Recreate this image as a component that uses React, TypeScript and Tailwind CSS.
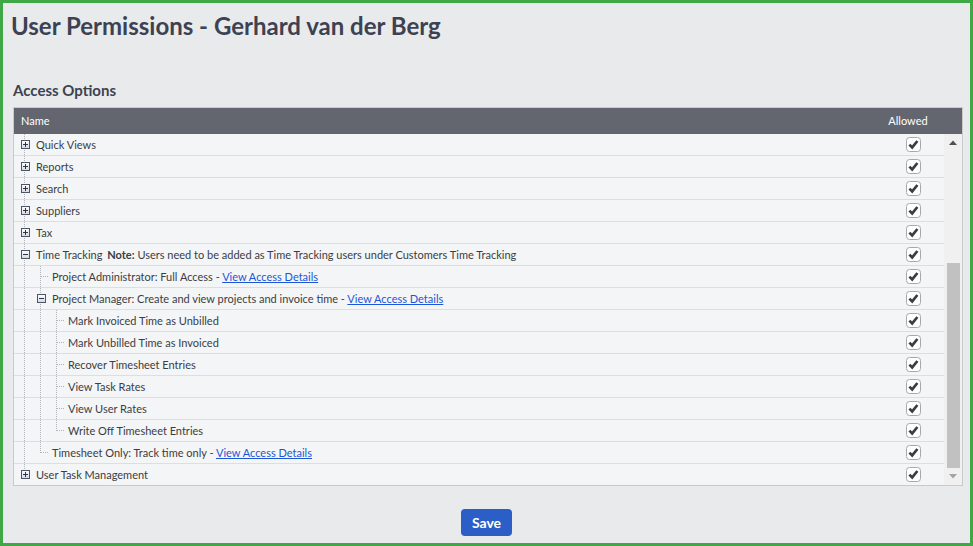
import React from "react";

type Kind = "line" | "tee" | "end" | "plus" | "minus" | "plusEnd";

const DOT = "border-[#b2b4b8]";

function Expander({ open }: { open: boolean }) {
  return (
    <svg width="9" height="9" viewBox="0 0 9 9" className="absolute left-[5px] top-[6px]">
      <defs>
        <linearGradient id="eg" x1="0" y1="0" x2="0" y2="1">
          <stop offset="0" stopColor="#ffffff" />
          <stop offset="1" stopColor="#d3d7de" />
        </linearGradient>
      </defs>
      <rect x="0.5" y="0.5" width="8" height="8" fill="url(#eg)" stroke="#4d5669" />
      <line x1="2" y1="4.5" x2="7" y2="4.5" stroke="#2f3647" strokeWidth="1" />
      {!open && <line x1="4.5" y1="2" x2="4.5" y2="7" stroke="#2f3647" strokeWidth="1" />}
    </svg>
  );
}

function TreeCell({ kind }: { kind: Kind }) {
  const full = kind === "line" || kind === "tee" || kind === "plus" || kind === "minus";
  const half = kind === "end" || kind === "plusEnd";
  const elbow = kind === "tee" || kind === "end";
  const exp = kind === "plus" || kind === "minus" || kind === "plusEnd";
  return (
    <div className="relative w-[16px] h-[21px] shrink-0">
      {full && <div className={`absolute left-[8px] top-0 bottom-0 border-l border-dotted ${DOT}`} />}
      {half && <div className={`absolute left-[8px] top-0 h-[11px] border-l border-dotted ${DOT}`} />}
      {elbow && <div className={`absolute left-[9px] top-[10px] w-[7px] border-t border-dotted ${DOT}`} />}
      {exp && <Expander open={kind === "minus"} />}
    </div>
  );
}

function Check() {
  return (
    <svg width="15" height="15" viewBox="0 0 15 15">
      <rect x="0.5" y="0.5" width="14" height="14" rx="3" fill="#ffffff" stroke="#a6a8ac" />
      <path d="M3.4 7.6 L6.2 10.4 L11.4 4" fill="none" stroke="#3a3d42" strokeWidth="2.7" strokeLinecap="butt" strokeLinejoin="miter" />
    </svg>
  );
}

function Link({ children }: { children: React.ReactNode }) {
  return <a href="#" className="text-[#1c55d6] underline">{children}</a>;
}

type Row = { cells: Kind[]; content: React.ReactNode };

const rows: Row[] = [
  { cells: ["plus"], content: "Quick Views" },
  { cells: ["plus"], content: "Reports" },
  { cells: ["plus"], content: "Search" },
  { cells: ["plus"], content: "Suppliers" },
  { cells: ["plus"], content: "Tax" },
  {
    cells: ["minus"],
    content: (
      <>
        Time Tracking <span className="ml-[2px] font-bold">Note:</span> Users need to be added as Time Tracking users under Customers Time Tracking
      </>
    ),
  },
  {
    cells: ["line", "tee"],
    content: (
      <>
        Project Administrator: Full Access - <Link>View Access Details</Link>
      </>
    ),
  },
  {
    cells: ["line", "minus"],
    content: (
      <>
        Project Manager: Create and view projects and invoice time - <Link>View Access Details</Link>
      </>
    ),
  },
  { cells: ["line", "line", "tee"], content: "Mark Invoiced Time as Unbilled" },
  { cells: ["line", "line", "tee"], content: "Mark Unbilled Time as Invoiced" },
  { cells: ["line", "line", "tee"], content: "Recover Timesheet Entries" },
  { cells: ["line", "line", "tee"], content: "View Task Rates" },
  { cells: ["line", "line", "tee"], content: "View User Rates" },
  { cells: ["line", "line", "end"], content: "Write Off Timesheet Entries" },
  {
    cells: ["line", "end"],
    content: (
      <>
        Timesheet Only: Track time only - <Link>View Access Details</Link>
      </>
    ),
  },
  { cells: ["plusEnd"], content: "User Task Management" },
];

export default function App() {
  return (
    <div className="w-[973px] h-[546px] box-border border-[3px] border-[#3fa745] bg-[#e9eaec] font-['Lato',sans-serif] overflow-hidden">
      <div className="pt-[8px] pl-[8px] pr-[7px]">
        <h1 className="text-[24px] leading-[30px] font-bold text-[#3c4252]">
          User Permissions - Gerhard van der Berg
        </h1>
        <h2 className="mt-[39px] ml-[2px] text-[15px] leading-[20px] font-bold text-[#3c4252]">
          Access Options
        </h2>
        <div className="mt-[7px] ml-[2px] w-[950px] border border-[#c8cace] bg-[#f4f5f7]">
          <div className="flex h-[26px] items-center bg-[#63666f] text-[11px] text-white">
            <div className="flex-1 pl-[7px]">Name</div>
            <div className="w-[62px] mr-[23px] text-center">Allowed</div>
          </div>
          <div className="flex">
            <div className="flex-1">
              {rows.map((r, i) => (
                <div
                  key={i}
                  className={`flex items-center pl-[2px] text-[11px] text-[#3b3d42] ${i < rows.length - 1 ? "h-[22px] border-b border-[#dcdee2]" : "h-[21px]"}`}
                >
                  {r.cells.map((c, j) => (
                    <TreeCell key={j} kind={c} />
                  ))}
                  <div className="flex-1 pl-[4px] whitespace-nowrap leading-[21px]">{r.content}</div>
                  <div className="w-[62px] flex justify-center items-center">
                    <Check />
                  </div>
                </div>
              ))}
            </div>
            <div className="w-[18px] flex flex-col bg-[#f0f0f0]">
              <div className="h-[17px] flex items-center justify-center">
                <svg width="8" height="5" viewBox="0 0 8 5">
                  <path d="M0 5 L4 0.5 L8 5 Z" fill="#505050" />
                </svg>
              </div>
              <div className="flex-1" />
              <div className="mx-auto w-[13px] h-[205px] bg-[#c1c1c1]" />
              <div className="h-[17px] flex items-center justify-center">
                <svg width="8" height="5" viewBox="0 0 8 5">
                  <path d="M0 0 L4 4.5 L8 0 Z" fill="#a3a3a3" />
                </svg>
              </div>
            </div>
          </div>
        </div>
        <div className="mt-[23px] flex justify-center pr-[1px]">
          <button className="w-[51px] h-[27px] rounded-[4px] bg-[#2b5ec7] text-white text-[14px] font-bold">
            Save
          </button>
        </div>
      </div>
    </div>
  );
}
